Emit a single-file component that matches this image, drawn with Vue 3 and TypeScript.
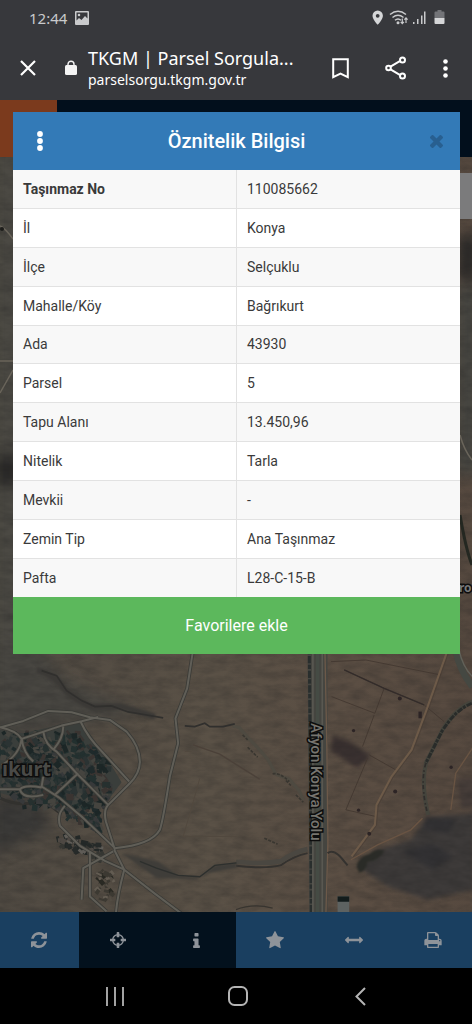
<script setup lang="ts">
interface Row { label: string; value: string }
interface Tool { name: string; box: string; w: number; h: number; d: string; active: boolean }
interface Dot { x: number; y: number; w: number; h: number; a: number; c: string }

const rows: Row[] = [
  { label: 'Taşınmaz No', value: '110085662' },
  { label: 'İl', value: 'Konya' },
  { label: 'İlçe', value: 'Selçuklu' },
  { label: 'Mahalle/Köy', value: 'Bağrıkurt' },
  { label: 'Ada', value: '43930' },
  { label: 'Parsel', value: '5' },
  { label: 'Tapu Alanı', value: '13.450,96' },
  { label: 'Nitelik', value: 'Tarla' },
  { label: 'Mevkii', value: '-' },
  { label: 'Zemin Tip', value: 'Ana Taşınmaz' },
  { label: 'Pafta', value: 'L28-C-15-B' },
]

const tools: Tool[] = [
  { name: 'Yenile', box: '0 0 1536 1536', w: 16, h: 16, active: true, d: 'M1511 928q0 5-1 7-64 268-268 434.5t-478 166.5q-146 0-282.5-55t-243.5-157l-129 129q-19 19-45 19t-45-19-19-45v-448q0-26 19-45t45-19h448q26 0 45 19t19 45-19 45l-137 137q71 66 161 102t187 36q134 0 250-65t186-179q11-17 53-117 8-23 30-23h192q13 0 22.5 9.5t9.5 22.5zm25-800v448q0 26-19 45t-45 19h-448q-26 0-45-19t-19-45 19-45l138-138q-148-137-349-137-134 0-250 65t-186 179q-11 17-53 117-8 23-30 23h-199q-13 0-22.5-9.5t-9.5-22.5v-7q65-268 270-434.5t480-166.5q146 0 284 55.5t245 156.5l130-129q19-19 45-19t45 19 19 45z' },
  { name: 'Konum', box: '0 0 1536 1536', w: 16, h: 16, active: false, d: 'M1197 896h-109q-26 0-45-19t-19-45v-128q0-26 19-45t45-19h109q-32-108-112.5-188.5t-188.5-112.5v109q0 26-19 45t-45 19h-128q-26 0-45-19t-19-45v-109q-108 32-188.5 112.5t-112.5 188.5h109q26 0 45 19t19 45v128q0 26-19 45t-45 19h-109q32 108 112.5 188.5t188.5 112.5v-109q0-26 19-45t45-19h128q26 0 45 19t19 45v109q108-32 188.5-112.5t112.5-188.5zm339-192v128q0 26-19 45t-45 19h-143q-37 161-154.5 278.5t-278.5 154.5v143q0 26-19 45t-45 19h-128q-26 0-45-19t-19-45v-143q-161-37-278.5-154.5t-154.5-278.5h-143q-26 0-45-19t-19-45v-128q0-26 19-45t45-19h143q37-161 154.5-278.5t278.5-154.5v-143q0-26 19-45t45-19h128q26 0 45 19t19 45v143q161 37 278.5 154.5t154.5 278.5h143q26 0 45 19t19 45z' },
  { name: 'Bilgi', box: '0 128 640 1408', w: 7, h: 15, active: false, d: 'M640 1344v128q0 26-19 45t-45 19h-512q-26 0-45-19t-19-45v-128q0-26 19-45t45-19h64v-384h-64q-26 0-45-19t-19-45v-128q0-26 19-45t45-19h384q26 0 45 19t19 45v576h64q26 0 45 19t19 45zm-128-1152v192q0 26-19 45t-45 19h-256q-26 0-45-19t-19-45v-192q0-26 19-45t45-19h256q26 0 45 19t19 45z' },
  { name: 'Favoriler', box: '0 0 1664 1664', w: 18, h: 18, active: true, d: 'M1664 615q0 22-26 48l-363 354 86 500q1 7 1 20 0 21-10.5 35.5t-30.5 14.5q-19 0-40-12l-449-236-449 236q-22 12-40 12-21 0-31.5-14.5t-10.5-35.5q0-6 2-20l86-500-364-354q-25-27-25-48 0-37 56-46l502-73 225-455q19-41 49-41t49 41l225 455 502 73q56 9 56 46z' },
  { name: 'Ölçüm', box: '0 256 1792 768', w: 18, h: 8, active: true, d: 'M1792 640q0 26-19 45l-256 256q-19 19-45 19t-45-19-19-45v-128h-1024v128q0 26-19 45t-45 19-45-19l-256-256q-19-19-19-45t19-45l256-256q19-19 45-19t45 19 19 45v128h1024v-128q0-26 19-45t45-19 45 19l256 256q19 19 19 45z' },
  { name: 'Yazdır', box: '0 0 1664 1536', w: 18, h: 16, active: true, d: 'M384 1408h896v-256h-896v256zm0-640h896v-384h-160q-40 0-68-28t-28-68v-160h-640v640zm1152 64q0-26-19-45t-45-19-45 19-19 45 19 45 45 19 45-19 19-45zm128 0v416q0 13-9.5 22.5t-22.5 9.5h-224v160q0 40-28 68t-68 28h-960q-40 0-68-28t-28-68v-160h-224q-13 0-22.5-9.5t-9.5-22.5v-416q0-79 56.5-135.5t135.5-56.5h64v-544q0-40 28-68t68-28h672q40 0 88 20t76 48l152 152q28 28 48 76t20 88v256h64q79 0 135.5 56.5t56.5 135.5z' },
]

// Repeatable pseudo-random scatter of roofs and trees
let seed = 17
function rnd(): number {
  seed = (seed * 16807) % 2147483647
  return seed / 2147483647
}
function scatter(count: number, size: number, colors: string[], place: () => [number, number]): Dot[] {
  return Array.from({ length: count }, () => {
    const [x, y] = place()
    return { x, y, w: size * (0.5 + rnd()), h: size * (0.4 + rnd() * 0.8), a: rnd() * 90, c: colors[Math.floor(rnd() * colors.length)] }
  })
}
const townColors = ['#1f2a2b', '#26302f', '#1c2626', '#2b3333', '#37393a', '#45443f', '#23302f', '#3a3431']
const town: Dot[] = [
  ...scatter(430, 16, townColors, () => {
    const x = 75 + rnd() * 245
    return [x, 240 + Math.max(0, x - 230) * 0.9 + rnd() * (225 - Math.max(0, x - 230) * 0.7)]
  }),
  ...scatter(130, 15, townColors, () => [rnd() * 130, 240 + rnd() * 205]),
  ...scatter(70, 15, townColors, () => {
    const x = 190 + rnd() * 120
    return [x, 450 + rnd() * 40 + (x - 190) * 0.4]
  }),
  ...scatter(75, 14, ['#232827', '#5f5c57', '#353632', '#262a29', '#4d4843'], () => {
    const t = rnd()
    return [165 + t * 125 + rnd() * 26, 535 + t * 50 + rnd() * 40]
  }),
  ...scatter(36, 13, ['#635c52', '#292923', '#3c3932', '#524c43'], () => [275 + rnd() * 65, 650 + rnd() * 100]),
]
</script>

<template>
  <div class="phone">
    <header class="browser">
      <div class="status">
        <span>12:44</span>
        <svg width="14" height="14" viewBox="0 0 14 14" aria-hidden="true">
          <path fill="#c9cacc" fill-rule="evenodd" d="M1 0h12q1 0 1 1v12q0 1-1 1H1q-1 0-1-1V1q0-1 1-1zm.5 1.500v8L4 7l2.500 2L10 5l2.500 2.500v-6zM4 2.700a1.300 1.300 0 1 1 0 2.600 1.300 1.300 0 0 1 0-2.600z" />
        </svg>
        <span class="spacer"></span>
        <svg class="signals" width="74" height="18" viewBox="0 0 74 18" aria-hidden="true">
          <path fill="#d5d6d8" fill-rule="evenodd" d="M5.700 1.500a5.200 5.200 0 0 0-5.200 5.200c0 3.900 5.200 9 5.200 9s5.200-5.100 5.200-9a5.200 5.200 0 0 0-5.200-5.200zm0 3.400a1.900 1.900 0 1 1 0 3.800 1.900 1.900 0 0 1 0-3.800z" />
          <g fill="none" stroke="#c9cacc" stroke-width="1.500">
            <path d="M18 5.500q8-6.500 16 0M20.500 8.500q5.500-4.500 11 0M23 11.300q3-2.600 6 0" />
            <path stroke-width="1.200" d="M30.300 9.500v5m-1.600-1.600 1.600 1.700 1.600-1.700M34 14V9m-1.600 1.700L34 9l1.600 1.700" />
          </g>
          <circle cx="26" cy="13.700" r="1.500" fill="#c9cacc" />
          <path fill="#c9cacc" d="M41 13h1.500v2H41zM45 10h1.500v5H45zM49 6.500h1.500V15H49zM52 2.500h1.500V15H52z" />
          <path fill="#737478" d="M65.500 1h4v1.500h2q1 0 1 1V9h-10V3.500q0-1 1-1h2z" />
          <path fill="#d5d6d8" d="M62.500 9h10v5q0 1-1 1h-8q-1 0-1-1z" />
        </svg>
      </div>
      <div class="address">
        <button class="plain" type="button" aria-label="Kapat">
          <svg width="16" height="16" viewBox="0 0 16 16"><path d="M1 1l14 14M15 1L1 15" stroke="#fff" stroke-width="2.200" /></svg>
        </button>
        <svg class="lock" width="12" height="16" viewBox="0 0 12 16" aria-hidden="true">
          <path d="M3 7V4.200a3 3 0 0 1 6 0V7" fill="none" stroke="#f4f4f4" stroke-width="1.400" />
          <rect y="5" width="12" height="10" rx="1.500" fill="#f4f4f4" />
        </svg>
        <div class="site">
          <div class="site-title">TKGM | Parsel Sorgula...</div>
          <div class="site-url">parselsorgu.tkgm.gov.tr</div>
        </div>
        <div class="actions">
          <button class="plain" type="button" aria-label="Yer işareti">
            <svg width="17" height="21" viewBox="0 0 17 21"><path d="M1.200 1.200h14.600v18L8.500 15.500l-7.300 3.700z" fill="none" stroke="#fff" stroke-width="2" /></svg>
          </button>
          <button class="plain" type="button" aria-label="Paylaş">
            <svg width="22" height="24" viewBox="0 0 22 24" fill="none" stroke="#fff" stroke-width="2"><path d="M5.500 10.700l9.300-5.500M5.500 13.300l9.300 5.500" /><circle cx="3.500" cy="12" r="2.300" /><circle cx="17.500" cy="4" r="2.500" /><circle cx="17.500" cy="20" r="2.500" /></svg>
          </button>
          <button class="plain" type="button" aria-label="Menü">
            <svg width="5" height="19" viewBox="0 0 5 19" fill="#fff"><circle cx="2.500" cy="2.500" r="2.300" /><circle cx="2.500" cy="9.500" r="2.300" /><circle cx="2.500" cy="16.500" r="2.300" /></svg>
          </button>
        </div>
      </div>
    </header>

    <main class="page">
      <svg class="map" viewBox="0 100 472 812" preserveAspectRatio="xMidYMax slice" aria-hidden="true">
        <defs>
          <filter id="grain" x="0" y="0" width="100%" height="100%" color-interpolation-filters="sRGB">
            <feTurbulence type="fractalNoise" baseFrequency="0.06 0.14" numOctaves="4" seed="6" />
            <feColorMatrix values="0 0 0 0 0.12  0 0 0 0 0.12  0 0 0 0 0.12  0.450 0 0 0 -0.130" />
          </filter>
          <filter id="soft" color-interpolation-filters="sRGB"><feGaussianBlur stdDeviation="7" /></filter>
          <filter id="feather" color-interpolation-filters="sRGB"><feGaussianBlur stdDeviation="3" /></filter>
          <linearGradient id="ground" x1="0" x2="1" y1="0" y2="0">
            <stop offset="0" stop-color="#504a42" /><stop offset="0.450" stop-color="#5a5146" /><stop offset="0.750" stop-color="#5b4e43" /><stop offset="1" stop-color="#56493f" />
          </linearGradient>
        </defs>
        <rect y="100" width="472" height="812" fill="url(#ground)" />
        <g filter="url(#soft)">
          <path d="M-10 100h40v570h-40z" fill="#4b4943" />
          <path d="M-10 640h45l25 35 50 25 30 15-80 10-70 20z" fill="#484641" />
          <path d="M-10 800q55-10 60 30l-60 25z" fill="#3a3937" />
          <path d="M-5 455h24v30h-24zM458 235h20v45h-20z" fill="#282726" />
          <path d="M455 285h25v190h-25z" fill="#454540" />
        </g>
        <g transform="translate(236 650) scale(0.333)">
          <g filter="url(#soft)">
            <path d="M365 650l60-50 100-30 50-70 140-10v230l-140 30-120-40z" fill="#3d3a39" />
            <path d="M500 605l90-25 60 40-60 40zM570 500l90 10-20 40-80-10z" fill="#323133" />
            <path d="M290 255l50 20 65 45-40 35-80-50z" fill="#3a3130" />
            <path d="M665 385h60v90h-50z" fill="#463d39" />
          </g>
        </g>
        <rect y="100" width="472" height="812" filter="url(#grain)" />
        <g transform="translate(236 650) scale(0.333)">
          <path d="M215 0h60v790h-55z" fill="#454540" />
          <path d="M220 0l4 400 2 390" fill="none" stroke="#292e2d" stroke-width="9" stroke-dasharray="13 5 22 4" />
          <path d="M231 0v790M259 0v790" stroke="#595851" stroke-width="5" />
          <path d="M245 0v790" stroke="#454b44" stroke-width="10" />
          <path d="M267 0l6 300 3 280-6 210" fill="none" stroke="#6c5949" stroke-width="4" />
          <g fill="none" stroke="#41362f" stroke-width="2.500">
            <path d="M285 35l105-5 225 45M325 60l120 55 120 50 60 50M445 115l-28 75-130-50M415 195l-35 95M395 325l-65 155 90 20M400 315l80 45" />
            <path d="M-10 228l20 5 25 30 30 30 30 35 25 45 40 15 30 35 12 28" stroke-width="10" stroke="#4e4a41" />
            <path d="M20 255l15 15M35 292l30 30M110 372q20-5 50 23M150 392l15 15M180 435l22 22M85 565l40 18" stroke-width="5" stroke="#393630" stroke-dasharray="9 4" />
            <path d="M325 60l120 55 120 50" stroke-width="4" stroke="#332c2a" />
          </g>
          <path d="M632 10l-60 170-45 120-60 80-45 85-5 60-70 95" fill="none" stroke="#6d5a48" stroke-width="6" />
          <path d="M637 12l-60 170-45 120-60 80-45 85-5 60-70 95" fill="none" stroke="#493c34" stroke-width="2" />
          <path d="M345 630l80-45 100-45 35-35M645 480l15-110 50-75" fill="none" stroke="#695443" stroke-width="4" />
          <path d="M710 155q-50 20-90 85l-48 95q-18 60 5 160" fill="none" stroke="#44443c" stroke-width="12" />
          <path d="M708 160q-50 20-90 85l-48 95" fill="none" stroke="#292b29" stroke-width="9" stroke-dasharray="17 4 9 3" />
          <path d="M570 340q-18 60 5 150" fill="none" stroke="#302d2b" stroke-width="5" stroke-dasharray="13 9 5 6" />
          <path d="M660 0q10 60 50 110" fill="none" stroke="#454842" stroke-width="20" />
          <path d="M670 0q10 50 40 80" fill="none" stroke="#616159" stroke-width="4" />
          <path d="M0 648q90 10 135-2 40-28 80-36m60 0q20-15 50 25l10 12" fill="none" stroke="#34322f" stroke-width="6" />
          <path d="M0 636q80 8 135-2 40-28 80-36" fill="none" stroke="#4a4741" stroke-width="14" />
          <path d="M362 650q5-30 40-38 20-18 43-10-12 30-50 35-5 30-25 32z" fill="#2a2b27" filter="url(#feather)" />
          <g fill="#2c2425"><rect x="548" y="185" width="10" height="20" /><circle cx="492" cy="146" r="6" /><circle cx="478" cy="425" r="6" /><circle cx="368" cy="481" r="5" /><circle cx="400" cy="552" r="6" /><circle cx="353" cy="242" r="5" /><circle cx="646" cy="352" r="5" /><path d="M300 0h60l-5 10-50-3z" /></g>
          <path d="M305 740h35v50h-35z" fill="#5d6261" /><path d="M305 740h35v16h-35z" fill="#131c1c" />
          <path d="M0 780q50-20 110-5" fill="none" stroke="#37342f" stroke-width="4" />
        </g>

        <g transform="translate(0 650) scale(0.333)">
          <path d="M0 240l70 10 110-25 65-8 75 105 45 75-45 60-30-5-40 50-90-25-70-60-60 20-40-10z" fill="#3a3e3b" />
          <path d="M110 60q60 15 85 60 40 35 80 50l90 0 100 30" fill="none" stroke="#3b3936" stroke-width="18" filter="url(#feather)" />
          <path d="M125 62l45 15 30 45 45 30 40 18 50-2 50 18 60 10 45 8M555 228l30 2 30-10 15 10 40 0 35-8" fill="none" stroke="#302f2d" stroke-width="5" />
          <path d="M365 610l110 25 60 42 65 8 45-38 65-8v15l-80 15-40 20-120-5z" fill="#3f3d39" filter="url(#feather)" />
          <path d="M420 635l50 20 65 22 65 4 45-34 65-8" fill="none" stroke="#2d2f2d" stroke-width="4" />
          <path d="M0 445q60 30 130 5l50 40" fill="none" stroke="#32312e" stroke-width="9" />
          <path d="M580 285l80 28 120 75" fill="none" stroke="#4b4139" stroke-width="4" />
          <path d="M555 305h20M600 385l-25 90-25 85h160" fill="none" stroke="#51483e" stroke-width="3" />
          <rect v-for="(t, i) in town" :key="i" :x="t.x" :y="t.y" :width="t.w" :height="t.h" :fill="t.c" :transform="`rotate(${t.a} ${t.x} ${t.y})`" />
          <g class="roads">
            <path v-for="pass in ['edge', 'core']" :key="pass" :class="pass" d="M0 233l70-20 75-30 70 4 55 15 60 8 50 35q40 45 40 90 0 35-30 65l-65 65q-15 15-7 50l27 85M0 232q50 10 65 35l30-10 90-30 60-13 50-13M65 265q-5 50-60 80M65 265q5 45 35 70M130 245q5 40 40 60l60 65 65 65 30 30M190 230q0 35-30 70M243 217q20 45 65 90l80 88M235 370l-70 65M130 380l-5 30 55 35 65 55 100 95M0 418h60q15-15 65-5M60 420q10 30 70 15M195 468q-25 25-15 60l60 60 75 45 55 25M343 600l30 60 90 70 80 60M345 595q110-10 135-55 10-30 30-160l25-100-8-75 35-90 17-110M340 605l-90 50-5 95M373 660q-20 75-25 130M270 605v135l50 45" />
          </g>
        </g>
        <g fill="none" stroke="#69645a" stroke-width="1.500">
          <path d="M0 226q5 2 13 13M0 361h13M13 370L0 393" /><path d="M460 515q6 35 12 50" stroke="#242721" stroke-width="3" /><path d="M460 435q4 15 12 25" />
        </g>
        <circle cx="2" cy="229" r="2" fill="#1d1d1b" />
        <path d="M459 173h13v46h-13z" fill="#7b7b7c" />
        <text class="place" x="2" y="776">ıkurt</text>
        <text class="place small" x="459" y="592">ro</text>
        <text class="street" transform="translate(311 723) rotate(90)">Afyon Konya Yolu</text>
      </svg>

      <div class="site-bar"><div class="site-logo"></div></div>

      <section class="dialog" aria-labelledby="dialog-title">
        <div class="dialog-head">
          <button class="plain" type="button" aria-label="Seçenekler">
            <svg width="6" height="20" viewBox="0 0 6 20" fill="#fff"><circle cx="3" cy="3" r="2.900" /><circle cx="3" cy="10" r="2.900" /><circle cx="3" cy="17" r="2.900" /></svg>
          </button>
          <h1 id="dialog-title">Öznitelik Bilgisi</h1>
          <button class="plain" type="button" aria-label="Kapat">
            <svg width="13" height="13" viewBox="110 258 1188 1188"><path fill="#285f90" d="M1298 1214q0 40-28 68l-136 136q-28 28-68 28t-68-28l-294-294-294 294q-28 28-68 28t-68-28l-136-136q-28-28-28-68t28-68l294-294-294-294q-28-28-28-68t28-68l136-136q28-28 68-28t68 28l294 294 294-294q28-28 68-28t68 28l136 136q28 28 28 68t-28 68l-294 294 294 294q28 28 28 68z" /></svg>
          </button>
        </div>
        <table>
          <tbody>
            <tr v-for="row in rows" :key="row.label">
              <th scope="row">{{ row.label }}</th>
              <td>{{ row.value }}</td>
            </tr>
          </tbody>
        </table>
        <button class="favourite" type="button">Favorilere ekle</button>
      </section>

      <nav class="tools">
        <button v-for="tool in tools" :key="tool.name" type="button" :class="['tool', { active: tool.active }]" :aria-label="tool.name">
          <svg :width="tool.w" :height="tool.h" :viewBox="tool.box"><path :d="tool.d" fill="#8e9399" /></svg>
        </button>
      </nav>
    </main>

    <footer class="keys">
      <button class="plain" type="button" aria-label="Son uygulamalar">
        <svg width="18" height="19" viewBox="0 0 18 19"><path d="M1 0v19M9 0v19M17 0v19" stroke="#b4b4b4" stroke-width="1.800" /></svg>
      </button>
      <button class="plain" type="button" aria-label="Ana ekran">
        <svg width="20" height="20" viewBox="0 0 20 20"><rect x="1" y="1" width="18" height="18" rx="5.500" fill="none" stroke="#b4b4b4" stroke-width="2" /></svg>
      </button>
      <button class="plain" type="button" aria-label="Geri">
        <svg width="11" height="19" viewBox="0 0 11 19"><path d="M10 1L1.500 9.500 10 18" fill="none" stroke="#b4b4b4" stroke-width="2" /></svg>
      </button>
    </footer>
  </div>
</template>

<style>
body {
  margin: 0;
  background: #000;
}
</style>

<style scoped>
.phone {
  display: flex;
  flex-direction: column;
  min-height: 100vh;
  font-family: Roboto, "Liberation Sans", sans-serif;
}
button {
  border: 0;
  font-family: inherit;
  cursor: pointer;
}
.plain {
  display: flex;
  align-items: center;
  justify-content: center;
  padding: 0;
  background: none;
}
svg {
  display: block;
  flex: none;
}
.browser {
  background: #37383c;
  color: #fff;
  font-family: "Noto Sans", "Open Sans", sans-serif;
}
.status {
  display: flex;
  align-items: center;
  gap: 8px;
  height: 36px;
  padding: 0 26px 0 29px;
  color: #c9cacc;
  font-size: 15px;
}
.spacer {
  flex: 1;
}
.address {
  display: flex;
  align-items: center;
  height: 64px;
  padding: 0 24px 0 20px;
}
.lock {
  margin: 0 11px 0 29px;
}
.site {
  flex: 1;
  min-width: 0;
  white-space: nowrap;
}
.site-title {
  font-size: 18px;
  line-height: 24px;
}
.site-url {
  font-size: 14px;
  line-height: 20px;
}
.actions {
  display: flex;
  align-items: center;
  gap: 36px;
}
.page {
  position: relative;
  display: flex;
  flex: 1;
  flex-direction: column;
  overflow: hidden;
  background: #504b44;
}
.map {
  position: absolute;
  inset: 0 0 56px;
  width: 100%;
  height: calc(100% - 56px);
}
.roads path {
  fill: none;
  stroke-linejoin: round;
}
.roads .edge {
  stroke: #3b3b37;
  stroke-width: 11px;
}
.roads .core {
  stroke: #605e57;
  stroke-width: 6px;
}
.place,
.street {
  fill: #77756f;
  stroke: #0d0d0d;
  stroke-width: 3px;
  paint-order: stroke;
}
.place {
  fill: #4a4a47;
  font: 700 20px "Noto Sans", sans-serif;
}
.small {
  fill: #777;
  font-size: 12px;
}
.street {
  font: 500 15px Roboto, sans-serif;
}
.site-bar {
  position: relative;
  height: 57px;
  background: #020f1c;
}
.site-logo {
  width: 57px;
  height: 100%;
  background: #7b3a1d;
}
.dialog {
  position: relative;
  margin: -45px 12px 24px 13px;
  background: #fff;
}
.dialog-head {
  display: flex;
  align-items: center;
  justify-content: space-between;
  height: 58px;
  padding: 0 17px 0 24px;
  background: #337ab7;
  color: #fff;
}
h1 {
  margin: 0;
  font-size: 20px;
  font-weight: 500;
  line-height: 24px;
}
table {
  width: 100%;
  height: 427px;
  border-collapse: collapse;
  table-layout: fixed;
  color: #3a3a3a;
  font-size: 14px;
  line-height: 20px;
}
tr:nth-child(odd) {
  background: #f8f8f8;
}
tr + tr {
  border-top: 1px solid #e2e2e2;
}
th,
td {
  padding: 0 10px;
  font-weight: 400;
  text-align: left;
}
td {
  border-left: 1px solid #e2e2e2;
}
tr:first-child th {
  font-weight: 700;
}
.favourite {
  display: block;
  width: 100%;
  height: 57px;
  background: #5cb85c;
  color: #fff;
  font-size: 16px;
}
.tools {
  position: relative;
  display: grid;
  grid-template-columns: repeat(6, 1fr);
  height: 56px;
  margin-top: auto;
  background: #03111d;
}
.tool {
  display: flex;
  align-items: center;
  justify-content: center;
  padding: 0;
  background: #03111d;
}
.tool.active {
  background: #1a3f60;
}
.keys {
  display: grid;
  grid-template-columns: repeat(3, 1fr);
  align-items: center;
  height: 56px;
  padding: 0 50px 0 54px;
  background: #000;
}
</style>
